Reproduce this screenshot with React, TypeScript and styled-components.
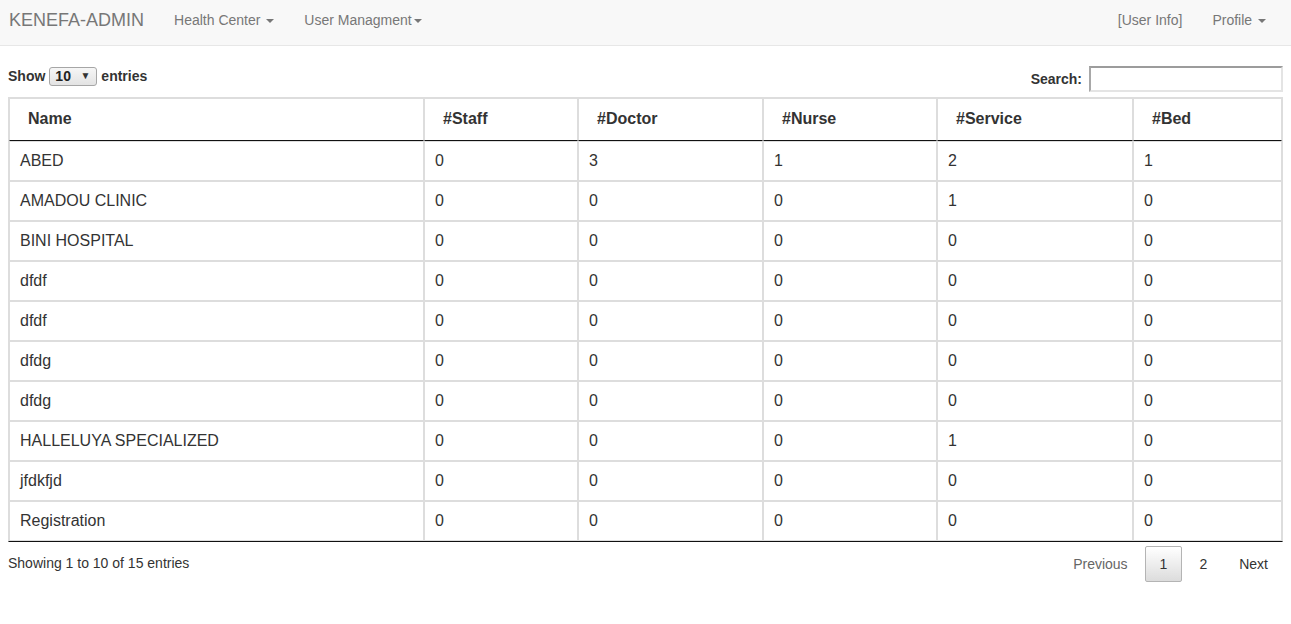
import React from "react";
import styled, { createGlobalStyle } from "styled-components";

const GlobalStyle = createGlobalStyle`
  *, *::before, *::after { box-sizing: border-box; }
  html, body {
    margin: 0;
    padding: 0;
    background: #fff;
    color: #333;
    font-family: "Liberation Sans", Arial, Helvetica, sans-serif;
    font-size: 14px;
    line-height: 20px;
  }
`;

const Navbar = styled.nav`
  display: flex;
  align-items: flex-start;
  height: 46px;
  padding-right: 10px;
  background: #f8f8f8;
  border-bottom: 1px solid #e7e7e7;
`;

const Brand = styled.a`
  padding: 10px 15px 10px 9px;
  font-size: 18px;
  line-height: 20px;
  color: #777;
  text-decoration: none;
  white-space: nowrap;
`;

const NavLink = styled.a`
  padding: 10px 15px;
  font-size: 14px;
  line-height: 20px;
  color: #777;
  text-decoration: none;
  white-space: pre;
`;

const Spacer = styled.div`
  flex: 1;
`;

const Caret = styled.span`
  display: inline-block;
  width: 0;
  height: 0;
  margin-left: 2px;
  vertical-align: middle;
  border-top: 4px solid #777;
  border-left: 4px solid transparent;
  border-right: 4px solid transparent;
`;

const Main = styled.main`
  padding: 20px 8px 0;
`;

const TopRow = styled.div`
  display: flex;
  justify-content: space-between;
  align-items: flex-start;
  height: 26px;
  margin-bottom: 5px;
`;

const LengthLabel = styled.label`
  display: flex;
  align-items: center;
  gap: 4px;
  height: 20px;
  font-weight: bold;
  font-size: 14px;
`;

const FakeSelect = styled.span`
  display: inline-flex;
  align-items: center;
  justify-content: space-between;
  width: 48px;
  height: 19px;
  padding: 0 6px 0 5px;
  border: 1px solid #a6a6a6;
  border-radius: 3px;
  background: linear-gradient(to bottom, #f6f6f6, #e3e3e3);
  font-weight: bold;
  font-size: 14px;
  color: #222;
`;

const SelectArrow = styled.span`
  font-size: 10px;
  line-height: 1;
  color: #333;
`;

const FilterLabel = styled.label`
  display: flex;
  align-items: center;
  gap: 7px;
  height: 26px;
  font-weight: bold;
  font-size: 14px;
`;

const SearchInput = styled.input`
  width: 194px;
  height: 26px;
  padding: 1px 3px;
  border-style: solid;
  border-width: 2px;
  border-color: #9c9c9c #e4e4e4 #e4e4e4 #a8a8a8;
  background: #fff;
  font-family: inherit;
  font-size: 14px;
  outline: none;
`;

const Table = styled.table`
  width: 100%;
  table-layout: fixed;
  border-collapse: separate;
  border-spacing: 0;
  border: 1px solid #ddd;
  border-bottom-color: #111;
`;

const Th = styled.th<{ $w: number }>`
  width: ${(p) => p.$w}px;
  padding: 9px 18px 11px;
  line-height: 21px;
  font-size: 16px;
  font-weight: bold;
  text-align: left;
  color: #333;
  border: 1px solid #ddd;
  border-bottom-color: #111;
`;

const Td = styled.td`
  padding: 8px 10px;
  line-height: 22px;
  font-size: 16px;
  color: #333;
  border: 1px solid #ddd;
  white-space: nowrap;
`;

const Footer = styled.div`
  display: flex;
  justify-content: space-between;
  align-items: flex-start;
`;

const Info = styled.div`
  padding-top: 11px;
  font-size: 14px;
  line-height: 20px;
`;

const Paginate = styled.div`
  display: flex;
  padding-top: 4px;
`;

const PageButton = styled.a<{ $current?: boolean; $disabled?: boolean }>`
  display: inline-block;
  margin-left: 2px;
  padding: 7px 14px;
  font-size: 14px;
  line-height: 20px;
  color: ${(p) => (p.$disabled ? "#666" : "#333")};
  text-decoration: none;
  border-radius: 2px;
  border: 1px solid ${(p) => (p.$current ? "#b4b4b4" : "transparent")};
  background: ${(p) =>
    p.$current ? "linear-gradient(to bottom, #fff 0%, #dcdcdc 100%)" : "transparent"};
`;

const columns: { label: string; w: number }[] = [
  { label: "Name", w: 415 },
  { label: "#Staff", w: 154 },
  { label: "#Doctor", w: 185 },
  { label: "#Nurse", w: 174 },
  { label: "#Service", w: 196 },
  { label: "#Bed", w: 149 },
];

const rows: (string | number)[][] = [
  ["ABED", 0, 3, 1, 2, 1],
  ["AMADOU CLINIC", 0, 0, 0, 1, 0],
  ["BINI HOSPITAL", 0, 0, 0, 0, 0],
  ["dfdf", 0, 0, 0, 0, 0],
  ["dfdf", 0, 0, 0, 0, 0],
  ["dfdg", 0, 0, 0, 0, 0],
  ["dfdg", 0, 0, 0, 0, 0],
  ["HALLELUYA SPECIALIZED", 0, 0, 0, 1, 0],
  ["jfdkfjd", 0, 0, 0, 0, 0],
  ["Registration", 0, 0, 0, 0, 0],
];

export default function App() {
  return (
    <>
      <GlobalStyle />
      <Navbar>
        <Brand>KENEFA-ADMIN</Brand>
        <NavLink>
          Health Center <Caret />
        </NavLink>
        <NavLink>
          User Managment<Caret />
        </NavLink>
        <Spacer />
        <NavLink>[User Info]</NavLink>
        <NavLink>
          Profile <Caret />
        </NavLink>
      </Navbar>
      <Main>
        <TopRow>
          <LengthLabel>
            Show
            <FakeSelect>
              10<SelectArrow>▼</SelectArrow>
            </FakeSelect>
            entries
          </LengthLabel>
          <FilterLabel>
            Search:
            <SearchInput type="search" />
          </FilterLabel>
        </TopRow>
        <Table>
          <thead>
            <tr>
              {columns.map((c) => (
                <Th key={c.label} $w={c.w}>
                  {c.label}
                </Th>
              ))}
            </tr>
          </thead>
          <tbody>
            {rows.map((r, i) => (
              <tr key={i}>
                {r.map((v, j) => (
                  <Td key={j}>{v}</Td>
                ))}
              </tr>
            ))}
          </tbody>
        </Table>
        <Footer>
          <Info>Showing 1 to 10 of 15 entries</Info>
          <Paginate>
            <PageButton $disabled>Previous</PageButton>
            <PageButton $current>1</PageButton>
            <PageButton>2</PageButton>
            <PageButton>Next</PageButton>
          </Paginate>
        </Footer>
      </Main>
    </>
  );
}
